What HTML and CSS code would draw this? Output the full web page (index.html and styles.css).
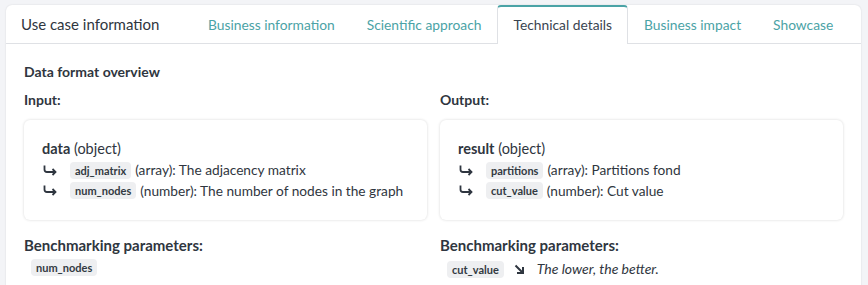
FILE: index.html
```html
<!DOCTYPE html>
<html>
<head>
<meta charset="utf-8">
<link rel="stylesheet" href="styles.css">
</head>
<body>
<div class="card">
  <div class="tabbar">
    <div class="title">Use case information</div>
    <div class="tabs">
      <div class="tab">Business information</div>
      <div class="tab">Scientific approach</div>
      <div class="tab active">Technical details</div>
      <div class="tab">Business impact</div>
      <div class="tab">Showcase</div>
    </div>
  </div>
  <div class="content">
    <div class="overview">Data format overview</div>
    <div class="cols">
      <div class="col">
        <div class="label">Input:</div>
        <div class="box">
          <div class="root"><b>data</b> (object)</div>
          <div class="row"><svg class="arrow" viewBox="0 0 14 11"><path d="M1.5 0.5V4.5Q1.5 7 4 7H12.5M9.5 4L12.5 7L9.5 10"/></svg><code>adj_matrix</code> (array): The adjacency matrix</div>
          <div class="row"><svg class="arrow" viewBox="0 0 14 11"><path d="M1.5 0.5V4.5Q1.5 7 4 7H12.5M9.5 4L12.5 7L9.5 10"/></svg><code>num_nodes</code> (number): The number of nodes in the graph</div>
        </div>
        <div class="label bench">Benchmarking parameters:</div>
        <div class="params"><code>num_nodes</code></div>
      </div>
      <div class="col">
        <div class="label">Output:</div>
        <div class="box">
          <div class="root"><b>result</b> (object)</div>
          <div class="row"><svg class="arrow" viewBox="0 0 14 11"><path d="M1.5 0.5V4.5Q1.5 7 4 7H12.5M9.5 4L12.5 7L9.5 10"/></svg><code>partitions</code> (array): Partitions fond</div>
          <div class="row"><svg class="arrow" viewBox="0 0 14 11"><path d="M1.5 0.5V4.5Q1.5 7 4 7H12.5M9.5 4L12.5 7L9.5 10"/></svg><code>cut_value</code> (number): Cut value</div>
        </div>
        <div class="label bench">Benchmarking parameters:</div>
        <div class="params"><code>cut_value</code><svg class="dir" viewBox="0 0 11 11"><path d="M1.5 1.5L9 9M3 9H9V3"/></svg><em>The lower, the better.</em></div>
      </div>
    </div>
  </div>
</div>
</body>
</html>
```
FILE: styles.css
```css
html, body {
  margin: 0;
  padding: 0;
  background: #f3f4f7;
}
body {
  padding: 5px 7px 0 6px;
  font-family: "Lato", "Open Sans", sans-serif;
  color: #2f3640;
}
.card {
  background: #fff;
  border-radius: 6px 6px 0 0;
  box-shadow: 0 0 2px rgba(0,0,0,0.12);
  height: 290px;
}
.tabbar {
  display: flex;
  align-items: stretch;
  height: 38px;
  border-bottom: 1px solid #dfe1e5;
  white-space: nowrap;
}
.title {
  padding-left: 15px;
  font-size: 15px;
  line-height: 38px;
  color: #2f3640;
  width: 171px;
}
.tabs {
  display: flex;
  align-items: stretch;
}
.tab {
  padding: 0 15px;
  font-size: 13.8px;
  line-height: 35px;
  color: #4ba3a6;
  border: 1px solid transparent;
  border-top: 2px solid transparent;
  border-bottom: none;
}
.tab.active {
  color: #3a4450;
  background: #fff;
  border-color: #dfe1e5;
  border-top-color: #4ba3a6;
  border-radius: 4px 4px 0 0;
  margin-bottom: -1px;
  line-height: 36px;
}
.content {
  padding: 18px 18px 0 18px;
}
.overview {
  font-weight: bold;
  font-size: 14px;
  line-height: 20px;
}
.cols {
  display: grid;
  grid-template-columns: 1fr 1fr;
  column-gap: 13px;
  margin-top: 8px;
}
.label {
  font-weight: bold;
  font-size: 14px;
  line-height: 20px;
}
.box {
  margin-top: 10px;
  border-radius: 6px;
  box-shadow: 0 0 3px rgba(0,0,0,0.16);
  padding: 18px 18px 19px 18px;
  font-size: 13.7px;
}
.root {
  font-size: 14.5px;
  line-height: 22px;
}
.row {
  display: flex;
  align-items: center;
  line-height: 20.5px;
  white-space: nowrap;
}
.arrow {
  width: 14px;
  height: 11px;
  margin: 0 13px 0 1px;
  fill: none;
  stroke: #2f3640;
  stroke-width: 1.8;
}
code {
  font-family: "Lato", sans-serif;
  font-weight: bold;
  font-size: 11px;
  background: #eeeff1;
  color: #333a42;
  border-radius: 4px;
  padding: 3px 5px;
  line-height: 11px;
  margin-right: 4px;
}
.bench {
  margin-top: 15px;
  font-size: 15px;
}
.params {
  display: flex;
  align-items: center;
  margin-top: 4px;
  padding-left: 7px;
  font-size: 14px;
  line-height: 20px;
}
.params code {
  margin-right: 0;
}
.dir {
  width: 11px;
  height: 11px;
  margin: 0 12px 0 10px;
  fill: none;
  stroke: #2f3640;
  stroke-width: 2;
}
em {
  font-size: 14px;
}
```
